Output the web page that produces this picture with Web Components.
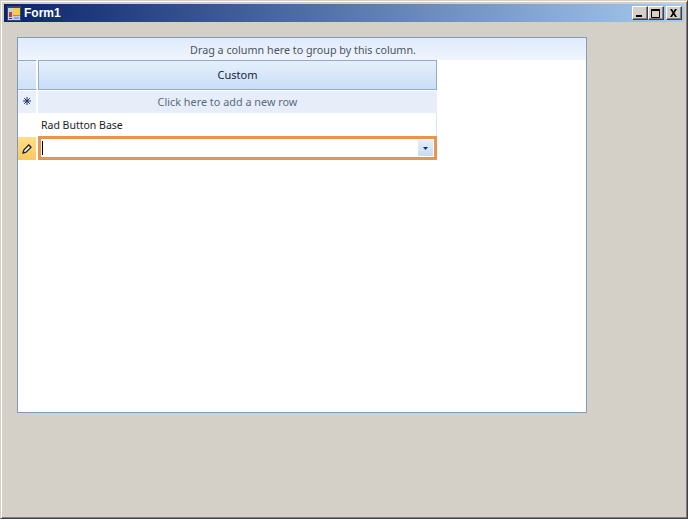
<!DOCTYPE html>
<html>
<head>
<meta charset="utf-8">
<title>Form1</title>
<style>
  html, body { margin: 0; height: 100%; background: #d4d0c8; }
  body { font-family: "Noto Sans", sans-serif; }
</style>
</head>
<body>
<win-form caption="Form1">
  <rad-grid>
    <grid-row kind="header" indicator="" label="Custom"></grid-row>
    <grid-row kind="new" indicator="star" label="Click here to add a new row"></grid-row>
    <grid-row kind="data" indicator="" label="Rad Button Base"></grid-row>
    <grid-row kind="edit" indicator="pencil"></grid-row>
  </rad-grid>
</win-form>

<script>
  class capButton extends HTMLElement {
    connectedCallback() {
      const glyphs = {
        min: `<path d="M3 8h6v2H3z" fill="#000"/>`,
        max: `<path d="M2.5 2.5h8v8h-8z" fill="none" stroke="#000"/><path d="M2 2h9v2H2z" fill="#000"/>`,
        close: `<path d="M3 2h2l1.5 2.5L8 2h2L7.5 6 10 10H8L6.5 7.5 5 10H3l2.5-4z" fill="#000"/>`
      };
      this.attachShadow({ mode: "open" }).innerHTML = `
        <style>
          :host {
            display: block;
            width: 16px;
            height: 14px;
            box-sizing: border-box;
            background: #d4d0c8;
            border-style: solid;
            border-width: 1px;
            border-color: #fff #404040 #404040 #fff;
            box-shadow: inset -1px -1px 0 #808080;
          }
          svg { display: block; }
        </style>
        <svg width="14" height="12" viewBox="0 0 14 12">${glyphs[this.getAttribute("glyph")]}</svg>
      `;
    }
  }
  customElements.define("cap-button", capButton);

  class winForm extends HTMLElement {
    connectedCallback() {
      this.attachShadow({ mode: "open" }).innerHTML = `
        <style>
          :host {
            display: flex;
            flex-direction: column;
            width: 688px;
            height: 519px;
            box-sizing: border-box;
            background: #d4d0c8;
            border-style: solid;
            border-width: 1px;
            border-color: #d4d0c8 #404040 #404040 #d4d0c8;
            box-shadow: inset 1px 1px 0 #fff, inset -1px -1px 0 #808080;
            padding: 3px;
          }
          .title {
            display: flex;
            align-items: center;
            flex: 0 0 18px;
            padding-left: 3px;
            background: linear-gradient(90deg, #0a246a 0%, #a6caf0 100%);
            color: #fff;
            font: bold 12px "Liberation Sans", sans-serif;
          }
          .title svg { margin-right: 3px; flex: none; }
          .btns { display: flex; margin-left: auto; margin-right: 2px; }
          .btns cap-button:last-child { margin-left: 2px; }
          .client { flex: 1; padding: 15px 0 0 13px; }
        </style>
        <div class="title">
          <svg width="14" height="15" viewBox="0 0 14 15">
            <rect x="0" y="0" width="14" height="15" fill="#c3cfe2"/>
            <rect x="0" y="0" width="14" height="2" fill="#34467c"/>
            <rect x="0" y="2" width="1" height="13" fill="#34467c"/>
            <rect x="13" y="2" width="1" height="13" fill="#34467c"/>
            <rect x="0" y="14" width="14" height="1" fill="#34467c"/>
            <rect x="2" y="6" width="3" height="5" fill="#c8402c"/>
            <rect x="2" y="12" width="3" height="1" fill="#34467c"/>
            <rect x="7" y="11" width="5" height="2" fill="#8fa8d8"/>
            <rect x="6" y="2" width="7" height="8" fill="#f8cc48"/>
            <rect x="6" y="9" width="7" height="1" fill="#b89028"/>
          </svg>
          <span>Form1</span>
          <div class="btns">
            <cap-button glyph="min"></cap-button>
            <cap-button glyph="max"></cap-button>
            <cap-button glyph="close"></cap-button>
          </div>
        </div>
        <div class="client"><slot></slot></div>
      `;
    }
  }
  customElements.define("win-form", winForm);

  class radGrid extends HTMLElement {
    connectedCallback() {
      this.attachShadow({ mode: "open" }).innerHTML = `
        <style>
          :host {
            display: block;
            width: 570px;
            height: 376px;
            box-sizing: border-box;
            background: #fff;
            border: 1px solid #7f9db9;
            font: 11px "Noto Sans", sans-serif;
          }
          .group {
            height: 22px;
            box-sizing: border-box;
            padding: 1px 0 0 2px;
            display: flex;
            align-items: center;
            justify-content: center;
            background: linear-gradient(180deg, #dfeafb 0%, #f0f5fd 100%);
            color: #4c5560;
            font-size: 10.75px;
          }
          .rows { width: 419px; }
        </style>
        <div class="group">Drag a column here to group by this column.</div>
        <div class="rows"><slot></slot></div>
      `;
    }
  }
  customElements.define("rad-grid", radGrid);

  class gridRow extends HTMLElement {
    connectedCallback() {
      const kind = this.getAttribute("kind");
      const label = this.getAttribute("label") || "";
      const marks = {
        star: `<svg width="8" height="8" viewBox="0 0 8 8"><path d="M4 0v8M0 4h8M1.2 1.2l5.6 5.6M1.2 6.8l5.6-5.6" stroke="#15305e" stroke-width="1" fill="none"/></svg>`,
        pencil: `<svg width="10" height="10" viewBox="0 0 10 10"><path d="M1 9l.8-3L6.8 1 9 3.2 4 8.2z" fill="#fff" stroke="#222" stroke-width="1.3"/></svg>`
      };
      const mark = marks[this.getAttribute("indicator")] || "";
      const cell = kind === "edit"
        ? `<div class="box"><span class="caret"></span><span class="drop"><svg width="5" height="3" viewBox="0 0 5 3"><path d="M0 0h5L2.5 3z" fill="#15305e"/></svg></span></div>`
        : `<span>${label}</span>`;
      this.attachShadow({ mode: "open" }).innerHTML = `
        <style>
          :host { display: flex; box-sizing: border-box; }
          :host([kind=header]) { height: 30px; margin-bottom: 1px; }
          :host([kind=new]) { height: 22px; }
          :host([kind=data]) { height: 23px; }
          :host([kind=edit]) { height: 24px; }
          .ind {
            flex: 0 0 19px;
            display: flex;
            align-items: center;
            justify-content: center;
            box-sizing: border-box;
            border-right: 1px solid #fff;
          }
          .cell {
            flex: 1;
            display: flex;
            align-items: center;
            box-sizing: border-box;
            margin-left: 1px;
            min-width: 0;
          }

          :host([kind=header]) .ind {
            background: linear-gradient(180deg, #e4eefb 0%, #cfe1f7 100%);
            border-top: 1px solid #93abc6;
            border-bottom: 1px solid #93abc6;
          }
          :host([kind=header]) .cell {
            justify-content: center;
            border: 1px solid #93abc6;
            padding-bottom: 2px;
            background: linear-gradient(180deg, #e6f0fc 0%, #c9def7 100%);
            color: #15253c;
          }
          :host([kind=new]) .ind { background: #e9f0f9; padding-bottom: 2px; }
          :host([kind=new]) .cell {
            justify-content: center;
            padding-right: 20px;
            padding-bottom: 2px;
            background: #e7eefa;
            color: #5a6a7e;
            font-size: 10.85px;
          }
          :host([kind=data]) .ind { background: #fff; }
          :host([kind=data]) .cell {
            padding-left: 3px;
            color: #1c1c1c;
            font-size: 10.5px;
            border-right: 1px solid #d5e4f5;
          }
          :host([kind=edit]) .ind {
            margin-top: 1px;
            background: linear-gradient(180deg, #ffdf88 0%, #fac95e 100%);
          }
          :host([kind=edit]) .cell {
            border: 3px solid #e8934f;
            background: #fff;
          }
          .box { flex: 1; display: flex; align-items: center; height: 100%; padding-left: 1px; }
          .caret { width: 1px; height: 14px; background: #000; }
          .drop {
            margin-left: auto;
            margin-right: 1px;
            width: 15px;
            height: 16px;
            display: flex;
            align-items: center;
            justify-content: center;
            background: linear-gradient(180deg, #e4eefb 0%, #c6dcf6 100%);
          }
        </style>
        <div class="ind">${mark}</div>
        <div class="cell">${cell}</div>
      `;
    }
  }
  customElements.define("grid-row", gridRow);
</script>
</body>
</html>
